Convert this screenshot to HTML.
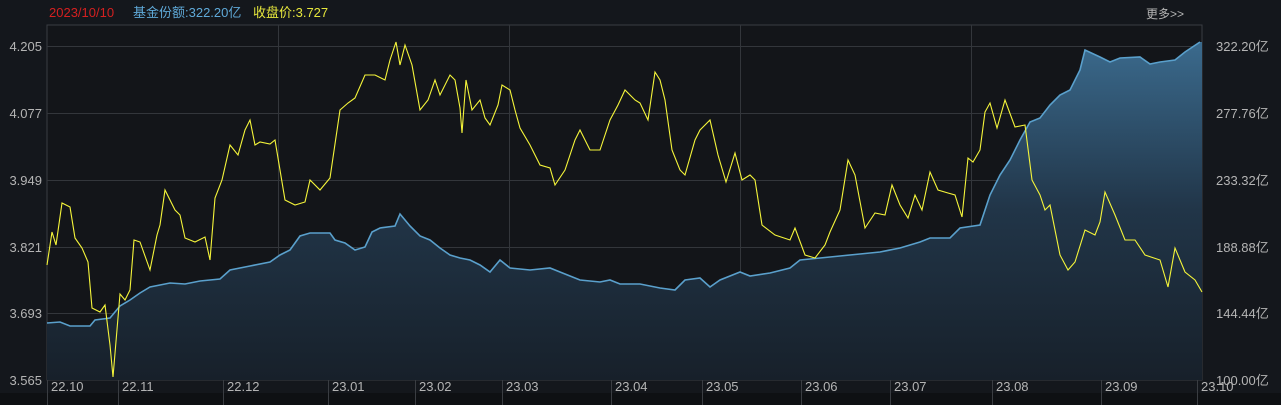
<!DOCTYPE html>
<html><head><meta charset="utf-8"><style>
html,body{margin:0;padding:0;background:#14171c;width:1281px;height:405px;overflow:hidden;font-family:"Liberation Sans","Noto Sans CJK SC",sans-serif;}
svg{position:absolute;left:0;top:0}
</style></head><body>
<svg width="1281" height="405" xmlns="http://www.w3.org/2000/svg">
<defs>
<linearGradient id="g" x1="0" y1="40" x2="0" y2="380" gradientUnits="userSpaceOnUse">
<stop offset="0" stop-color="#3b6b8e"/><stop offset="0.5" stop-color="#213548"/><stop offset="1" stop-color="#17202a"/>
</linearGradient>
</defs>
<rect x="0" y="0" width="1281" height="405" fill="#14171c"/>
<rect x="47" y="25" width="1155" height="355" fill="#131519" stroke="#3a3d42"/>
<g stroke="#33363b" stroke-width="1">
<line x1="47" y1="46.5" x2="1202" y2="46.5"/><line x1="47" y1="113.5" x2="1202" y2="113.5"/>
<line x1="47" y1="180.5" x2="1202" y2="180.5"/><line x1="47" y1="247.5" x2="1202" y2="247.5"/>
<line x1="47" y1="313.5" x2="1202" y2="313.5"/>
<line x1="278.5" y1="25" x2="278.5" y2="380"/><line x1="509.5" y1="25" x2="509.5" y2="380"/>
<line x1="740.5" y1="25" x2="740.5" y2="380"/><line x1="971.5" y1="25" x2="971.5" y2="380"/>
</g>
<polygon fill="url(#g)" points="47,380 47,323 60,322 70,326 90,326 95,320 110,318 120,306 130,300 140,293 150,287 170,283 185,284 200,281 220,279 230,270 250,266 270,262 280,255 290,250 300,236 310,233 330,233 335,240 345,243 355,250 365,247 372,232 380,228 395,226 400,214 410,226 420,236 430,240 440,248 450,255 460,258 470,260 480,265 490,272 500,260 510,268 530,270 550,268 560,272 570,276 580,280 600,282 610,280 620,284 640,284 660,288 675,290 685,280 700,278 710,287 720,280 740,272 750,276 770,273 790,268 800,260 820,258 840,256 860,254 880,252 900,248 920,242 930,238 950,238 960,228 980,225 990,195 1000,175 1010,160 1020,140 1030,122 1040,118 1050,105 1060,95 1070,90 1080,70 1085,50 1100,57 1110,62 1120,58 1140,57 1150,64 1160,62 1175,60 1185,52 1200,42 1202,42 1202,380"/>
<polyline fill="none" stroke="#5aa0cc" stroke-width="1.6" points="47,323 60,322 70,326 90,326 95,320 110,318 120,306 130,300 140,293 150,287 170,283 185,284 200,281 220,279 230,270 250,266 270,262 280,255 290,250 300,236 310,233 330,233 335,240 345,243 355,250 365,247 372,232 380,228 395,226 400,214 410,226 420,236 430,240 440,248 450,255 460,258 470,260 480,265 490,272 500,260 510,268 530,270 550,268 560,272 570,276 580,280 600,282 610,280 620,284 640,284 660,288 675,290 685,280 700,278 710,287 720,280 740,272 750,276 770,273 790,268 800,260 820,258 840,256 860,254 880,252 900,248 920,242 930,238 950,238 960,228 980,225 990,195 1000,175 1010,160 1020,140 1030,122 1040,118 1050,105 1060,95 1070,90 1080,70 1085,50 1100,57 1110,62 1120,58 1140,57 1150,64 1160,62 1175,60 1185,52 1200,42"/>
<polyline fill="none" stroke="#f5f53a" stroke-width="1.1" points="47,265 52,232 56,245 62,203 70,207 75,238 82,248 88,262 92,308 100,312 105,305 110,345 113,377 120,294 125,300 130,290 134,240 140,242 150,270 157,235 160,225 165,190 175,210 180,215 185,238 195,242 205,237 210,260 215,198 222,180 230,145 238,155 245,130 250,120 255,145 260,142 270,144 275,140 285,200 295,205 305,202 310,180 320,190 330,178 340,110 348,103 355,98 365,75 375,75 385,80 390,60 396,42 400,65 405,45 412,65 420,110 428,100 435,80 440,95 450,75 455,80 460,108 462,133 466,80 472,110 480,100 485,118 490,125 498,105 502,85 510,90 515,110 520,128 530,145 540,165 550,168 555,185 565,170 575,140 580,130 590,150 600,150 610,120 618,105 625,90 635,100 640,103 648,120 655,72 660,80 665,100 672,150 680,170 685,175 695,140 700,130 710,120 718,155 726,182 735,153 742,180 750,175 755,180 762,225 775,235 790,240 795,228 805,255 815,258 825,245 830,232 840,210 848,160 855,175 865,228 875,213 885,215 892,185 900,205 908,218 915,195 922,210 930,172 938,190 948,193 955,195 962,217 968,158 973,162 980,150 985,112 990,103 997,128 1005,100 1015,127 1025,125 1032,180 1040,195 1045,210 1050,205 1060,255 1068,270 1075,262 1085,230 1095,235 1100,222 1105,192 1115,215 1125,240 1135,240 1145,255 1160,260 1168,287 1175,248 1185,272 1195,280 1202,292"/>
<rect x="0" y="393" width="1281" height="12" fill="#0e1013"/>
<g stroke="#3a3d42"><line x1="47.5" y1="380" x2="47.5" y2="405"/><line x1="118.5" y1="380" x2="118.5" y2="405"/><line x1="223.5" y1="380" x2="223.5" y2="405"/><line x1="328.5" y1="380" x2="328.5" y2="405"/><line x1="415.5" y1="380" x2="415.5" y2="405"/><line x1="502.5" y1="380" x2="502.5" y2="405"/><line x1="611.5" y1="380" x2="611.5" y2="405"/><line x1="702.5" y1="380" x2="702.5" y2="405"/><line x1="801.5" y1="380" x2="801.5" y2="405"/><line x1="890.5" y1="380" x2="890.5" y2="405"/><line x1="992.5" y1="380" x2="992.5" y2="405"/><line x1="1101.5" y1="380" x2="1101.5" y2="405"/><line x1="1197.5" y1="380" x2="1197.5" y2="405"/></g>
<g font-size="13" fill="#b4b4b4">
<text x="51" y="391">22.10</text><text x="122" y="391">22.11</text><text x="227" y="391">22.12</text><text x="332" y="391">23.01</text><text x="419" y="391">23.02</text><text x="506" y="391">23.03</text><text x="615" y="391">23.04</text><text x="706" y="391">23.05</text><text x="805" y="391">23.06</text><text x="894" y="391">23.07</text><text x="996" y="391">23.08</text><text x="1105" y="391">23.09</text><text x="1201" y="391">23.10</text>
<text x="42" y="51" text-anchor="end">4.205</text><text x="42" y="118" text-anchor="end">4.077</text><text x="42" y="185" text-anchor="end">3.949</text><text x="42" y="252" text-anchor="end">3.821</text><text x="42" y="318" text-anchor="end">3.693</text><text x="42" y="385" text-anchor="end">3.565</text>
<text x="1216" y="51">322.20亿</text><text x="1216" y="118">277.76亿</text><text x="1216" y="185">233.32亿</text><text x="1216" y="252">188.88亿</text><text x="1216" y="318">144.44亿</text><text x="1216" y="385">100.00亿</text>
<text x="1146" y="18" font-size="12">更多&gt;&gt;</text>
</g>
<text x="49" y="17" font-size="13" fill="#d42020">2023/10/10</text>
<text x="133" y="17" font-size="13" fill="#5fa9d8">基金份额:322.20亿</text>
<text x="253" y="17" font-size="13" fill="#e6e63c">收盘价:3.727</text>
</svg>
</body></html>
